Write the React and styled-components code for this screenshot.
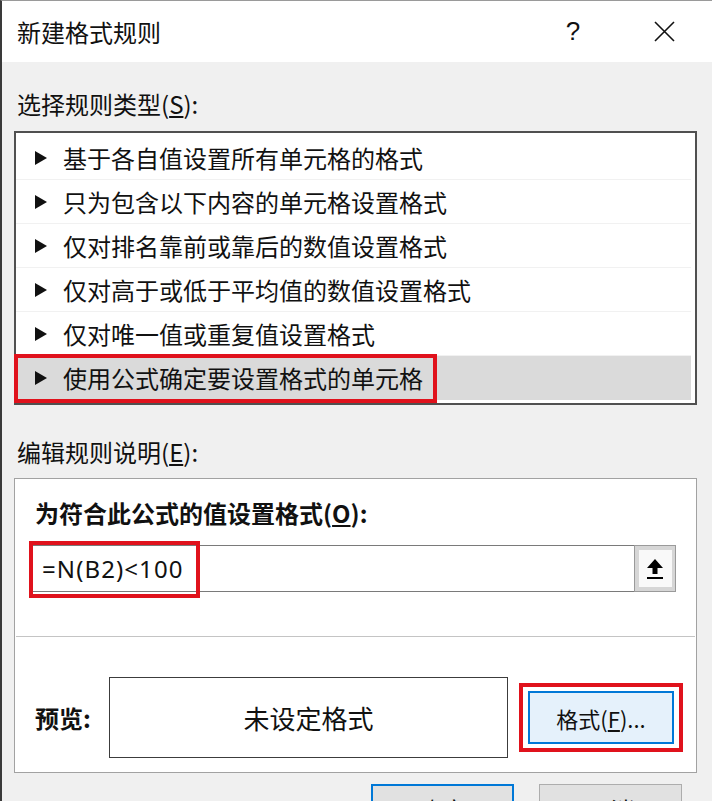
import React from "react";
import styled, { createGlobalStyle } from "styled-components";

const RULE_TYPES = [
    "基于各自值设置所有单元格的格式",
    "只为包含以下内容的单元格设置格式",
    "仅对排名靠前或靠后的数值设置格式",
    "仅对高于或低于平均值的数值设置格式",
    "仅对唯一值或重复值设置格式",
    "使用公式确定要设置格式的单元格",
];
const SELECTED = 5;

const GlobalStyle = createGlobalStyle`
    html, body {
        margin: 0;
        padding: 0;
        background: #f0f0f0;
    }
`

const Dialog = styled.div`
    box-sizing: border-box;
    width: 712px;
    height: 801px;
    overflow: hidden;
    display: flex;
    flex-direction: column;

    background: #f0f0f0;
    border-left: 2px solid #3a3a3a;
    border-top: 1px solid #9a9a9a;

    font-family: "Noto Sans CJK SC", "Noto Sans", sans-serif;
    color: #111;
`

const TitleBar = styled.div`
    flex: none;
    display: flex;
    align-items: center;
    height: 61px;
    padding: 0 18px 0 15px;
    background: #fff;
    font-size: 24px;
`

const TitleText = styled.div`
    flex: 1;
`

const TitleButton = styled.div`
    display: flex;
    align-items: center;
    justify-content: center;
    width: 60px;
    height: 40px;
    margin-left: ${props => props.$gap || 0}px;
    font-family: "Liberation Sans", sans-serif;
    font-size: 26px;
`

const Body = styled.div`
    display: flex;
    flex-direction: column;
    padding: 0 15px 0 12px;
`

const SectionLabel = styled.div`
    margin-top: ${props => props.$top}px;
    padding-left: 3px;
    font-size: 24px;
    line-height: 32px;
`

const ListBox = styled.div`
    box-sizing: border-box;
    height: 274px;
    margin-top: 11px;
    padding: 3px 2px 3px 0;
    border: 2px solid #505050;
    background: #fff;
`

const RuleRow = styled.div`
    position: relative;
    box-sizing: border-box;
    display: flex;
    align-items: center;
    gap: 16px;
    height: 44px;
    padding-left: 19px;
    margin-right: 2px;
    font-size: 24px;
    background: ${props => props.$selected ? "#dadada" : "transparent"};
    border-bottom: 1px solid ${props => props.$last ? "transparent" : "#f1f1f1"};
`

// red annotation frames drawn over the dialog
const Callout = styled.div`
    position: absolute;
    left: ${props => props.$left}px;
    top: ${props => props.$top}px;
    width: ${props => props.$width}px;
    height: ${props => props.$height}px;
    box-sizing: border-box;
    border: 4px solid #e0121c;
    pointer-events: none;
`

const Panel = styled.div`
    box-sizing: border-box;
    height: 295px;
    margin-top: 10px;
    border: 1px solid #a2a2a2;
    background: #fff;
    display: flex;
    flex-direction: column;
`

const PanelTop = styled.div`
    padding: 18px 20px 0 17px;
`

const BoldLabel = styled.div`
    padding-left: 3px;
    font-size: 24px;
    line-height: 32px;
    font-weight: 700;
`

const FormulaRow = styled.div`
    display: flex;
    margin-top: 16px;
`

const FormulaInput = styled.div`
    position: relative;
    box-sizing: border-box;
    display: flex;
    align-items: center;
    width: 602px;
    height: 47px;
    padding-left: 9px;
    border: 1px solid #7a7a7a;
    border-right: none;
    font-family: "Noto Sans", sans-serif;
    font-size: 24px;
    letter-spacing: 1.1px;
`

const CollapseButton = styled.div`
    box-sizing: border-box;
    display: flex;
    align-items: center;
    justify-content: center;
    width: 42px;
    height: 47px;
    border: 1px solid #9a9a9a;
    background: #d6d6d6;
`

const CollapseFace = styled.div`
    display: flex;
    align-items: center;
    justify-content: center;
    width: 33px;
    height: 37px;
    background: #f9f9f9;
`

const Divider = styled.div`
    height: 1px;
    margin: 44px 1px 0;
    background: #c4c4c4;
`

const PreviewRow = styled.div`
    display: flex;
    align-items: center;
    margin-top: 40px;
    padding-left: 20px;
`

const PreviewLabel = styled.div`
    width: 74px;
    font-size: 24px;
    font-weight: 700;
`

const PreviewBox = styled.div`
    box-sizing: border-box;
    display: flex;
    align-items: center;
    justify-content: center;
    width: 399px;
    height: 81px;
    border: 1px solid #3c3c3c;
    font-size: 26px;
`

const FormatCallout = styled.div`
    box-sizing: border-box;
    display: flex;
    align-items: center;
    justify-content: center;
    width: 164px;
    height: 69px;
    margin-left: 11px;
    border: 4px solid #e0121c;
    background: #fff;
`

const Button = styled.div`
    box-sizing: border-box;
    display: flex;
    align-items: center;
    justify-content: center;
    width: ${props => props.$width || 143}px;
    height: ${props => props.$height || 50}px;
    background: ${props => props.$bg || "#e1e1e1"};
    border: ${props => props.$primary ? "2px solid #0078d7" : "1px solid #adadad"};
    font-size: ${props => props.$size || 24}px;
`

const Footer = styled.div`
    display: flex;
    justify-content: flex-end;
    gap: 25px;
    margin-top: 11px;
    padding-right: 15px;
`

function Triangle() {
    return (
        <svg width="12" height="14" viewBox="0 0 12 14">
            <polygon points="0,0 12,7 0,14" fill="#111" />
        </svg>
    );
}

function CloseIcon() {
    return (
        <svg width="21" height="21" viewBox="0 0 21 21">
            <path d="M1 1 L20 20 M20 1 L1 20" stroke="#111" strokeWidth="1.6" fill="none" />
        </svg>
    );
}

function UpArrow() {
    return (
        <svg width="18" height="22" viewBox="0 0 18 22">
            <polygon points="9,1 17,10 11.5,10 11.5,16 6.5,16 6.5,10 1,10" fill="#000" />
            <rect x="1" y="19" width="16" height="2" fill="#000" />
        </svg>
    );
}

export default function App() {
    return (
        <>
            <GlobalStyle />
            <Dialog>
                <TitleBar>
                    <TitleText>新建格式规则</TitleText>
                    <TitleButton>?</TitleButton>
                    <TitleButton $gap={31}><CloseIcon /></TitleButton>
                </TitleBar>

                <Body>
                    <SectionLabel $top={26}>选择规则类型(<u>S</u>):</SectionLabel>
                    <ListBox>
                        {RULE_TYPES.map((text, index) => (
                            <RuleRow
                                key={"rule-" + index}
                                $selected={index === SELECTED}
                                $last={index === RULE_TYPES.length - 1}
                            >
                                <Triangle />
                                <span>{text}</span>
                                {index === SELECTED
                                    ? <Callout $left={-2} $top={-2} $width={423} $height={49} />
                                    : null}
                            </RuleRow>
                        ))}
                    </ListBox>

                    <SectionLabel $top={31}>编辑规则说明(<u>E</u>):</SectionLabel>
                    <Panel>
                        <PanelTop>
                            <BoldLabel>为符合此公式的值设置格式(<u>O</u>):</BoldLabel>
                            <FormulaRow>
                                <FormulaInput>
                                    =N(B2)&lt;100
                                    <Callout $left={-4} $top={-5} $width={171} $height={57} />
                                </FormulaInput>
                                <CollapseButton>
                                    <CollapseFace><UpArrow /></CollapseFace>
                                </CollapseButton>
                            </FormulaRow>
                        </PanelTop>
                        <Divider />
                        <PreviewRow>
                            <PreviewLabel>预览:</PreviewLabel>
                            <PreviewBox>未设定格式</PreviewBox>
                            <FormatCallout>
                                <Button $primary $width={146} $height={53} $bg="#e5f1fb" $size={22}>
                                    格式(<u>F</u>)...
                                </Button>
                            </FormatCallout>
                        </PreviewRow>
                    </Panel>

                    <Footer>
                        <Button $primary>确定</Button>
                        <Button>取消</Button>
                    </Footer>
                </Body>
            </Dialog>
        </>
    );
}
